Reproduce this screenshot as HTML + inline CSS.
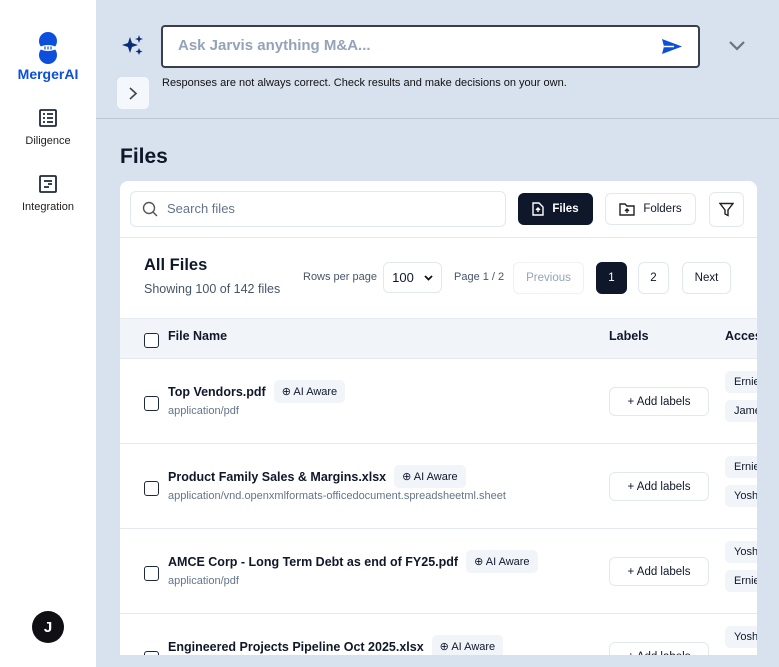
<!DOCTYPE html>
<html><head><meta charset="utf-8"><style>
*{box-sizing:border-box;margin:0;padding:0}
body{width:779px;height:667px;overflow:hidden;background:#d8e1ee;font-family:"Liberation Sans",sans-serif;color:#0f172a;position:relative}
.a{position:absolute}
.side{left:0;top:0;width:96px;height:667px;background:#fff}
.nav{width:96px;text-align:center;font-size:11px;color:#222}
.btn{position:absolute;border:1px solid #e2e8f0;border-radius:6px;background:#fff;font-size:11.5px;display:flex;align-items:center;justify-content:center;gap:8px}
.card{left:120px;top:181px;width:637px;height:474px;background:#fff;border-radius:8px 8px 0 0;overflow:hidden}
.row{position:absolute;left:0;width:640px;height:85px;border-top:1px solid #e5eaf1}
.cb{position:absolute;width:15px;height:15px;border:1.5px solid #1e293b;border-radius:3px;background:#fff}
.nm{position:absolute;left:48px;font-size:12.5px;font-weight:bold;display:flex;align-items:center;gap:8px;white-space:nowrap}
.chip{background:#f1f5f9;border-radius:5px;font-weight:normal;font-size:11px;padding:5px 8px;display:flex;align-items:center;gap:4px}
.ty{position:absolute;left:48px;font-size:11px;color:#64748b;white-space:nowrap}
.acc{position:absolute;left:605px;background:#f1f5f9;border-radius:5px;font-size:11px;padding:5px 9px;width:60px}
</style></head><body>
<div class="a side"></div>
<svg class="a" style="left:36px;top:32px" width="24" height="32" viewBox="0 0 24 32"><circle cx="12" cy="9" r="9" fill="#0b4fdc"/><circle cx="12" cy="23" r="9" fill="#0b4fdc"/><ellipse cx="12" cy="16" rx="8" ry="3" fill="#fff"/><path d="M9 14.5v3M12 14.5v3M15 14.5v3" stroke="#0b4fdc" stroke-width="1.2"/></svg>
<div class="a" style="left:0;top:66px;width:96px;text-align:center;color:#0b4fdc;font-weight:bold;font-size:14px">MergerAI</div>
<svg class="a" style="left:39px;top:109px" width="18" height="18" viewBox="0 0 18 18" fill="none" stroke="#1e293b" stroke-width="1.8"><rect x="1" y="1" width="16" height="16" rx="1"/><path d="M4 5h2M8 5h6M4 9h2M8 9h6M4 13h2M8 13h6"/></svg>
<div class="a nav" style="top:135px">Diligence</div>
<svg class="a" style="left:39px;top:175px" width="18" height="18" viewBox="0 0 18 18" fill="none" stroke="#1e293b" stroke-width="1.8"><rect x="1" y="1" width="16" height="16" rx="1"/><path d="M5 6h8M9 9h4M5 12h5"/></svg>
<div class="a nav" style="top:201px">Integration</div>
<div class="a" style="left:32px;top:611px;width:32px;height:32px;border-radius:50%;background:#0f0f14;color:#fff;font-weight:bold;font-size:15px;display:flex;align-items:center;justify-content:center">J</div>

<svg class="a" style="left:121px;top:34px" width="24" height="24" viewBox="0 0 24 24" fill="#0a2a7a"><path d="M9 3l2 6 6 2-6 2-2 6-2-6-6-2 6-2z"/><path d="M18 1l1 3 3 1-3 1-1 3-1-3-3-1 3-1z"/><path d="M18 14l1 2.5 2.5 1-2.5 1-1 2.5-1-2.5-2.5-1 2.5-1z"/></svg>
<div class="a" style="left:161px;top:25px;width:539px;height:43px;border:2px solid #3a3f4b;border-radius:4px;background:#fff"></div>
<div class="a" style="left:178px;top:37px;font-size:15px;font-weight:bold;color:#94a3b8">Ask Jarvis anything M&amp;A...</div>
<svg class="a" style="left:661px;top:38px" width="22" height="17" viewBox="0 0 22 17"><path d="M1 1l20 7.5L1 16l2-7.5z" fill="#0b4fdc"/><path d="M3 8.5h10" stroke="#fff" stroke-width="1.5"/></svg>
<svg class="a" style="left:728px;top:40px" width="18" height="11" viewBox="0 0 18 11" fill="none" stroke="#6b7280" stroke-width="2.2"><path d="M2 2l7 7 7-7"/></svg>
<div class="a" style="left:117px;top:77px;width:32px;height:32px;background:#f4f7fb;border-radius:5px"></div>
<svg class="a" style="left:128px;top:87px" width="10" height="13" viewBox="0 0 10 13" fill="none" stroke="#444" stroke-width="1.6"><path d="M2 1l6 5.5L2 12"/></svg>
<div class="a" style="left:162px;top:77px;font-size:11px;color:#111">Responses are not always correct. Check results and make decisions on your own.</div>
<div class="a" style="left:96px;top:118px;width:683px;height:1px;background:#b9c6d8"></div>
<div class="a" style="left:120px;top:145px;font-size:21px;font-weight:bold">Files</div>

<div class="a card">
 <div class="a" style="left:10px;top:10px;width:376px;height:36px;border:1px solid #e2e8f0;border-radius:6px"></div>
 <svg class="a" style="left:22px;top:20px" width="16" height="16" viewBox="0 0 16 16" fill="none" stroke="#555" stroke-width="1.4"><circle cx="7" cy="7" r="5.5"/><path d="M11 11l4 4"/></svg>
 <div class="a" style="left:47px;top:20px;font-size:13px;color:#64748b">Search files</div>
 <div class="btn" style="left:398px;top:12px;width:75px;height:32px;background:#0f172a;color:#fff;border-color:#0f172a;font-weight:bold">
  <svg width="12" height="14" viewBox="0 0 12 14" fill="none" stroke="#fff" stroke-width="1.4"><path d="M1 1h6l4 4v8H1z"/><path d="M6 10V6M4 8l2-2 2 2"/></svg>Files</div>
 <div class="btn" style="left:485px;top:12px;width:91px;height:32px">
  <svg width="16" height="13" viewBox="0 0 16 13" fill="none" stroke="#222" stroke-width="1.4"><path d="M1 1h5l2 2h7v9H1z"/><path d="M8 10V6M6 8l2-2 2 2"/></svg>Folders</div>
 <div class="btn" style="left:589px;top:11px;width:35px;height:35px">
  <svg width="15" height="15" viewBox="0 0 15 15" fill="none" stroke="#222" stroke-width="1.4"><path d="M1 1.5h13L9 8v5.5L6 12V8z"/></svg></div>
 <div class="a" style="left:0;top:56px;width:640px;height:1px;background:#e5eaf1"></div>
 <div class="a" style="left:24px;top:75px;font-size:16.5px;font-weight:bold">All Files</div>
 <div class="a" style="left:24px;top:101px;font-size:12.5px;color:#475569">Showing 100 of 142 files</div>
 <div class="a" style="left:183px;top:90px;font-size:11px;color:#475569">Rows per page</div>
 <div class="btn" style="left:263px;top:81px;width:59px;height:31px;font-size:13px;gap:10px">100 <svg width="9" height="6" viewBox="0 0 9 6" fill="none" stroke="#111" stroke-width="1.8"><path d="M1 1l3.5 3.5L8 1"/></svg></div>
 <div class="a" style="left:334px;top:90px;font-size:11px;color:#475569">Page 1 / 2</div>
 <div class="btn" style="left:393px;top:81px;width:71px;height:32px;color:#94a3b8;border-color:#eef2f6">Previous</div>
 <div class="btn" style="left:476px;top:81px;width:31px;height:32px;background:#0f172a;color:#fff;border-color:#0f172a">1</div>
 <div class="btn" style="left:518px;top:81px;width:31px;height:32px">2</div>
 <div class="btn" style="left:562px;top:81px;width:49px;height:32px">Next</div>
 <div class="a" style="left:0;top:137px;width:640px;height:40px;background:#f1f5f9;border-top:1px solid #e5eaf1"></div>
 <div class="cb" style="left:24px;top:152px"></div>
 <div class="a" style="left:48px;top:148px;font-size:12.5px;font-weight:bold">File Name</div>
 <div class="a" style="left:489px;top:148px;font-size:12.5px;font-weight:bold">Labels</div>
 <div class="a" style="left:605px;top:148px;font-size:12.5px;font-weight:bold">Access</div>

 <div class="row" style="top:177px">
  <div class="cb" style="left:24px;top:37px"></div>
  <div class="nm" style="top:21px">Top Vendors.pdf<span class="chip">⊕ AI Aware</span></div>
  <div class="ty" style="top:46px">application/pdf</div>
  <div class="btn" style="left:489px;top:28px;width:100px;height:29px">+ Add labels</div>
  <div class="acc" style="top:12px">Ernie</div><div class="acc" style="top:41px">James</div>
 </div>
 <div class="row" style="top:262px">
  <div class="cb" style="left:24px;top:37px"></div>
  <div class="nm" style="top:21px">Product Family Sales &amp; Margins.xlsx<span class="chip">⊕ AI Aware</span></div>
  <div class="ty" style="top:46px">application/vnd.openxmlformats-officedocument.spreadsheetml.sheet</div>
  <div class="btn" style="left:489px;top:28px;width:100px;height:29px">+ Add labels</div>
  <div class="acc" style="top:12px">Ernie</div><div class="acc" style="top:41px">Yoshi</div>
 </div>
 <div class="row" style="top:347px">
  <div class="cb" style="left:24px;top:37px"></div>
  <div class="nm" style="top:21px">AMCE Corp - Long Term Debt as end of FY25.pdf<span class="chip">⊕ AI Aware</span></div>
  <div class="ty" style="top:46px">application/pdf</div>
  <div class="btn" style="left:489px;top:28px;width:100px;height:29px">+ Add labels</div>
  <div class="acc" style="top:12px">Yoshi</div><div class="acc" style="top:41px">Ernie</div>
 </div>
 <div class="row" style="top:432px">
  <div class="cb" style="left:24px;top:37px"></div>
  <div class="nm" style="top:21px">Engineered Projects Pipeline Oct 2025.xlsx<span class="chip">⊕ AI Aware</span></div>
  <div class="btn" style="left:489px;top:28px;width:100px;height:29px">+ Add labels</div>
  <div class="acc" style="top:12px">Yoshi</div>
 </div>
</div>
</body></html>
